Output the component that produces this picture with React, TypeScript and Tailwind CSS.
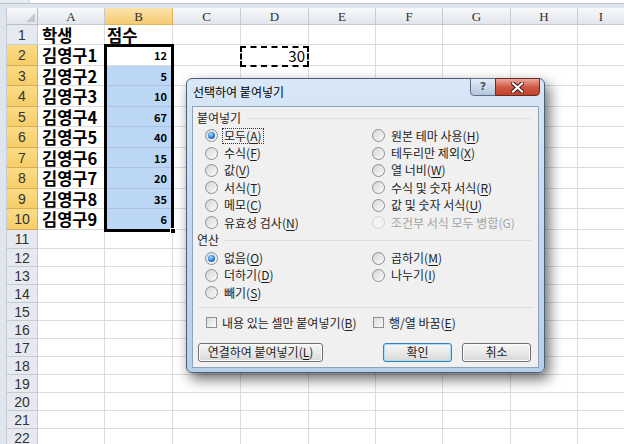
import React from 'react'

const KR = { fontFamily: '"Noto Sans CJK KR", "Noto Sans", sans-serif' }

const colWidths = ['w-[67px]', 'w-[68px]', 'w-[68px]', 'w-[68px]', 'w-[67px]', 'w-[67px]', 'w-[68px]', 'w-[67px]']
const letters = ['A', 'B', 'C', 'D', 'E', 'F', 'G', 'H']

const rowHeights = [
  'h-[20px]', 'h-[21px]', 'h-[20px]', 'h-[21px]', 'h-[20px]', 'h-[21px]', 'h-[20px]', 'h-[21px]', 'h-[20px]', 'h-[21px]',
  'h-[19px]', 'h-[18px]', 'h-[18px]', 'h-[18px]', 'h-[18px]', 'h-[18px]', 'h-[18px]', 'h-[18px]', 'h-[18px]', 'h-[18px]',
  'h-[18px]', 'h-[18px]',
]

const students = ['김영구1', '김영구2', '김영구3', '김영구4', '김영구5', '김영구6', '김영구7', '김영구8', '김영구9']
const scores = [12, 5, 10, 67, 40, 15, 20, 35, 6]

function ColumnHeader() {
  return (
    <div className="flex h-[17px]">
      <div className="relative w-[31px] shrink-0 border-r border-b border-[#b7c0cc] bg-linear-to-b from-[#f7f8fa] to-[#e2e6ec]">
        <svg className="absolute right-[2px] bottom-[2px]" width="9" height="9" viewBox="0 0 9 9">
          <polygon points="9,0 9,9 0,9" fill="#c3c8cf" />
        </svg>
      </div>
      {letters.map((l, i) => (
        <div
          key={l}
          className={
            colWidths[i] +
            ' shrink-0 flex items-center justify-center border-r border-b text-[13px] leading-[15px] text-[#2f2f2f] ' +
            (l === 'B'
              ? 'border-[#e3b35a] bg-linear-to-b from-[#fbe3ab] to-[#f6ca72]'
              : 'border-[#c5cbd3] bg-linear-to-b from-[#f7f8fa] to-[#e2e6ec]')
          }
          style={{ fontFamily: '"Liberation Serif", serif' }}
        >
          {l}
        </div>
      ))}
      <div
        className="flex-1 flex items-center justify-center border-b border-[#c5cbd3] bg-linear-to-b from-[#f7f8fa] to-[#e2e6ec] text-[13px] leading-[15px] text-[#2f2f2f]"
        style={{ fontFamily: '"Liberation Serif", serif' }}
      >
        I
      </div>
    </div>
  )
}

function Row({ n }: { n: number }) {
  const selected = n >= 2 && n <= 10
  const blue = n >= 3 && n <= 10
  return (
    <div className={'flex ' + rowHeights[n - 1]}>
      <div
        className={
          'w-[31px] shrink-0 flex items-center justify-center border-r border-b text-[14px] leading-[16px] text-[#333] ' +
          (selected
            ? 'border-[#d9ad55] bg-linear-to-b from-[#fbdc86] to-[#f6cd68]'
            : 'border-[#c5cbd3] bg-[#e6eaf0]')
        }
        style={{ fontFamily: '"Liberation Sans", sans-serif' }}
      >
        {n}
      </div>
      {letters.map((l, i) => {
        let content: React.ReactNode = null
        let cls = 'border-[#dadcdd]'
        if (l === 'A') {
          if (n === 1) content = '학생'
          else if (n <= 10) content = students[n - 2]
          if (content) cls += ' pl-[4px] text-[16.5px] leading-[18px] font-bold text-black'
        }
        if (l === 'B') {
          if (n === 1) {
            content = '점수'
            cls += ' pl-[2px] text-[16.5px] leading-[18px] font-bold text-black'
          } else if (n <= 10) {
            content = scores[n - 2]
            cls += ' justify-end pr-[5px] text-[11px] leading-[14px] font-bold text-black'
          }
          if (blue) cls += ' bg-[#bcd7f5] border-b-[#a9c3e0]'
        }
        if (l === 'D' && n === 2) {
          content = '30'
          cls += ' justify-end pr-[3px] text-[15px] leading-[17px] text-black'
        }
        return (
          <div
            key={l}
            className={colWidths[i] + ' shrink-0 flex items-center whitespace-nowrap border-r border-b ' + cls}
            style={KR}
          >
            {content}
          </div>
        )
      })}
      <div className="flex-1 border-b border-[#dadcdd]" />
    </div>
  )
}

function U({ children }: { children: React.ReactNode }) {
  return <span className="underline underline-offset-[2px]">{children}</span>
}

function Radio({ checked, disabled }: { checked?: boolean; disabled?: boolean }) {
  return (
    <span
      className={
        'w-[13px] h-[13px] shrink-0 rounded-full border flex items-center justify-center ' +
        (disabled ? 'border-[#d2d2d2] bg-[#f3f3f3]' : 'border-[#8e8f8f] bg-linear-to-br from-[#d6d6d6] to-[#fbfbfb]')
      }
    >
      {checked && <span className="w-[7px] h-[7px] rounded-full bg-[radial-gradient(circle_at_40%_35%,#a8e0ff,#2a7bd0_55%,#16509a)]" />}
    </span>
  )
}

function Check() {
  return <span className="w-[11px] h-[11px] shrink-0 border border-[#8e8f8f] bg-linear-to-br from-[#dcdcdc] to-[#fbfbfb]" />
}

function Opt({ label, checked, disabled, focus }: { label: React.ReactNode; checked?: boolean; disabled?: boolean; focus?: boolean }) {
  return (
    <div className="flex items-center h-[17.4px] gap-[5px]">
      <Radio checked={checked} disabled={disabled} />
      <span
        className={
          'leading-[14px] px-[1px] ' +
          (disabled ? 'text-[#a3a3a3] ' : 'text-[#1e1e1e] ') +
          (focus ? 'outline outline-1 outline-dotted outline-[#333]' : '')
        }
      >
        {label}
      </span>
    </div>
  )
}

function GroupLabel({ children }: { children: React.ReactNode }) {
  return (
    <div className="flex items-center h-[18px] pl-[4px] pr-[7px] gap-[6px]">
      <span className="text-[#1e1e1e] leading-[14px]">{children}</span>
      <span className="flex-1 h-px bg-[#d5dfe5]" />
    </div>
  )
}

function Btn({ children, def, w }: { children: React.ReactNode; def?: boolean; w: string }) {
  return (
    <div
      className={
        w +
        ' h-[19px] flex items-center justify-center rounded-[3px] border leading-[14px] text-[#1e1e1e] bg-linear-to-b from-[#f6f6f6] via-[#e9e9e9] to-[#d8d8d8] ' +
        (def ? 'border-[#3c7fb1] shadow-[inset_0_0_0_1px_#a8e0fb]' : 'border-[#707070] shadow-[inset_0_0_0_1px_#fcfcfc]')
      }
    >
      {children}
    </div>
  )
}

function Dialog() {
  return (
    <div className="absolute left-[186px] top-[78px] w-[359px] h-[295px] rounded-[6px] border border-[#4d5f78] bg-linear-to-b from-[#d9e8f7] via-[#c3d9f0] to-[#b7d0ea] shadow-[4px_6px_14px_rgba(0,0,0,0.6)] flex flex-col">
      <div className="h-[27px] flex items-start">
        <div className="flex-1 pl-[6px] pt-[6px] text-[12px] leading-[14px] text-black" style={KR}>
          선택하여 붙여넣기
        </div>
        <div className="flex -mt-px mr-[4px]">
          <div
            className="w-[26px] h-[18px] flex items-center justify-center rounded-bl-[4px] border border-[#5d6f88] bg-linear-to-b from-[#e4edf7] to-[#b4c6dc] text-[11px] leading-[12px] font-bold text-[#3f5670]"
            style={{ fontFamily: '"DejaVu Sans", sans-serif' }}
          >
            ?
          </div>
          <div className="w-[45px] h-[18px] -ml-px flex items-center justify-center rounded-br-[4px] border border-[#6b2a22] bg-linear-to-b from-[#e9a99c] via-[#cf5a45] to-[#c0432c]">
            <svg width="13" height="11" viewBox="0 0 13 11">
              <path d="M2 1.5 L11 9.5 M11 1.5 L2 9.5" stroke="#3b1510" strokeWidth="4" strokeLinecap="square" />
              <path d="M2 1.5 L11 9.5 M11 1.5 L2 9.5" stroke="#ffffff" strokeWidth="2.2" strokeLinecap="square" />
            </svg>
          </div>
        </div>
      </div>
      <div className="flex-1 mx-[5px] mb-[4px] border border-[#8ea3bb] bg-[#f0f0f0] pt-[2px] text-[12px] flex flex-col" style={KR}>
        <GroupLabel>붙여넣기</GroupLabel>
        <div className="grid grid-cols-[167px_1fr] pl-[12px]">
          <div className="flex flex-col">
            <Opt checked focus label={<>모두(<U>A</U>)</>} />
            <Opt label={<>수식(<U>F</U>)</>} />
            <Opt label={<>값(<U>V</U>)</>} />
            <Opt label={<>서식(<U>T</U>)</>} />
            <Opt label={<>메모(<U>C</U>)</>} />
            <Opt label={<>유효성 검사(<U>N</U>)</>} />
          </div>
          <div className="flex flex-col">
            <Opt label={<>원본 테마 사용(<U>H</U>)</>} />
            <Opt label={<>테두리만 제외(<U>X</U>)</>} />
            <Opt label={<>열 너비(<U>W</U>)</>} />
            <Opt label={<>수식 및 숫자 서식(<U>R</U>)</>} />
            <Opt label={<>값 및 숫자 서식(<U>U</U>)</>} />
            <Opt disabled label="조건부 서식 모두 병합(G)" />
          </div>
        </div>
        <GroupLabel>연산</GroupLabel>
        <div className="grid grid-cols-[167px_1fr] pl-[12px]">
          <div className="flex flex-col">
            <Opt checked label={<>없음(<U>O</U>)</>} />
            <Opt label={<>더하기(<U>D</U>)</>} />
            <Opt label={<>빼기(<U>S</U>)</>} />
          </div>
          <div className="flex flex-col">
            <Opt label={<>곱하기(<U>M</U>)</>} />
            <Opt label={<>나누기(<U>I</U>)</>} />
          </div>
        </div>
        <div className="mt-[5px] mx-[5px] h-px bg-[#d5dfe5]" />
        <div className="grid grid-cols-[167px_1fr] pl-[13px] h-[30px] items-center">
          <div className="flex items-center gap-[5px]">
            <Check />
            <span className="text-[#1e1e1e] leading-[14px]">내용 있는 셀만 붙여넣기(<U>B</U>)</span>
          </div>
          <div className="flex items-center gap-[5px]">
            <Check />
            <span className="text-[#1e1e1e] leading-[14px]">행/열 바꿈(<U>E</U>)</span>
          </div>
        </div>
        <div className="flex items-center mt-[5px] pl-[5px] pr-[7px]">
          <Btn w="w-[125px]">
            연결하여 붙여넣기(<U>L</U>)
          </Btn>
          <div className="flex-1" />
          <Btn def w="w-[69px]">
            확인
          </Btn>
          <div className="w-[10px]" />
          <Btn w="w-[69px]">
            취소
          </Btn>
        </div>
      </div>
    </div>
  )
}

export default function App() {
  const rows = Array.from({ length: 22 }, (_, i) => i + 1)
  return (
    <div className="relative w-[624px] h-[444px] overflow-hidden bg-white">
      <div className="h-[8px] flex flex-col">
        <div className="h-[3px] flex">
          <div className="w-[30px] bg-[#e9edf2] border-r border-[#c9d0d9]" />
          <div className="flex-1 bg-white" />
        </div>
        <div className="h-px bg-[#b9c3cf]" />
        <div className="flex-1 bg-[#dfe5ec]" />
      </div>
      <div className="flex">
        <div className="w-[7px] shrink-0 bg-[#dfe5ec] border-r border-[#c3ccd7]" />
        <div className="flex-1 flex flex-col">
          <ColumnHeader />
          {rows.map((n) => (
            <Row key={n} n={n} />
          ))}
        </div>
      </div>

      {/* selection border B2:B10 */}
      <div className="absolute left-[104px] top-[44px] w-[70px] h-[188px] border-[3px] border-black" />
      <div className="absolute left-[170px] top-[228px] w-[6px] h-[6px] bg-black border border-white" />

      {/* copy marquee on D2 */}
      <div className="absolute left-[240px] top-[46px] w-[69px] h-[21px] border-2 border-dashed border-black" />

      <Dialog />
    </div>
  )
}
